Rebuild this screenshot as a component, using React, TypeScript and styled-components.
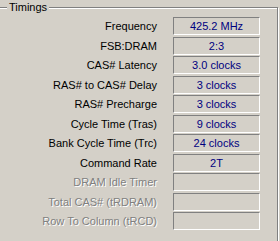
import styled, { createGlobalStyle } from "styled-components";

const GlobalStyle = createGlobalStyle`
  html, body {
    margin: 0;
    padding: 0;
    background: #d4d0c8;
    overflow: hidden;
  }
  body {
    font-family: "Liberation Sans", Arial, sans-serif;
    font-size: 11px;
  }
`;

type Timing = {
  label: string;
  value?: string;
  disabled?: boolean;
};

const timings: Timing[] = [
  { label: "Frequency", value: "425.2 MHz" },
  { label: "FSB:DRAM", value: "2:3" },
  { label: "CAS# Latency", value: "3.0 clocks" },
  { label: "RAS# to CAS# Delay", value: "3 clocks" },
  { label: "RAS# Precharge", value: "3 clocks" },
  { label: "Cycle Time (Tras)", value: "9 clocks" },
  { label: "Bank Cycle Time (Trc)", value: "24 clocks" },
  { label: "Command Rate", value: "2T" },
  { label: "DRAM Idle Timer", disabled: true },
  { label: "Total CAS# (tRDRAM)", disabled: true },
  { label: "Row To Column (tRCD)", disabled: true },
];

export default function App() {
  return (
    <>
      <GlobalStyle />
      <Page>
        <Group>
          <Legend>Timings</Legend>
          <Rows>
            {timings.map((t) => (
              <Row key={t.label}>
                <Label $disabled={t.disabled}>{t.label}</Label>
                <ValueBox>{t.value}</ValueBox>
              </Row>
            ))}
          </Rows>
        </Group>
      </Page>
    </>
  );
}

const Page = styled.div`
  width: 280px;
  height: 241px;
  padding-top: 7px;
  box-sizing: border-box;
  overflow: hidden;
`;

const Group = styled.div`
  position: relative;
  margin-left: -10px;
  width: 288px;
  height: 250px;
  box-sizing: border-box;
  border: 1px solid #808080;
  box-shadow: 1px 1px 0 #fff, inset 1px 1px 0 #fff;
  padding-top: 9px;
`;

const Legend = styled.span`
  position: absolute;
  top: -8px;
  left: 16px;
  padding: 0 2px;
  background: #d4d0c8;
  color: #000;
  line-height: 14px;
`;

const Rows = styled.div`
  display: grid;
  row-gap: 1.5px;
`;

const Row = styled.div`
  display: grid;
  grid-template-columns: 166px 87px;
  column-gap: 16px;
  align-items: center;
  height: 18px;
`;

const Label = styled.div<{ $disabled?: boolean }>`
  text-align: right;
  white-space: nowrap;
  color: ${(p) => (p.$disabled ? "#808080" : "#000")};
  text-shadow: ${(p) => (p.$disabled ? "1px 1px 0 #fff" : "none")};
`;

const ValueBox = styled.div`
  height: 18px;
  box-sizing: border-box;
  border-top: 1px solid #808080;
  border-left: 1px solid #808080;
  border-bottom: 1px solid #fff;
  border-right: 1px solid #fff;
  color: #000080;
  text-align: center;
  line-height: 16px;
  white-space: nowrap;
`;
